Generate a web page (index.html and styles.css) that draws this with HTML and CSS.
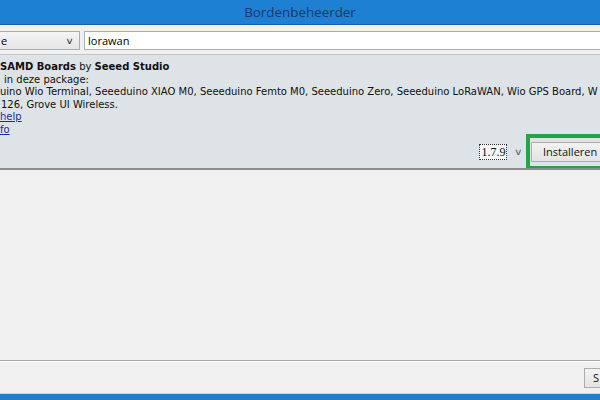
FILE: index.html
```html
<!DOCTYPE html>
<html>
<head>
<meta charset="utf-8">
<link rel="stylesheet" href="styles.css">
</head>
<body>
<div class="window">
  <div class="titlebar">Bordenbeheerder</div>
  <div class="toolbar">
    <div class="combo"><span class="combo-text">e</span><span class="chev">&#x2228;</span></div>
    <div class="search">lorawan</div>
  </div>
  <div class="card">
    <div class="line"><b>SAMD Boards</b> by <b>Seeed Studio</b></div>
    <div class="line indent">in deze package:</div>
    <div class="line">uino Wio Terminal, Seeeduino XIAO M0, Seeeduino Femto M0, Seeeduino Zero, Seeeduino LoRaWAN, Wio GPS Board, W</div>
    <div class="line indent2">126, Grove UI Wireless.</div>
    <div class="line"><a href="#">help</a></div>
    <div class="line"><a href="#">fo</a></div>
    <div class="actions">
      <span class="version">1.7.9</span>
      <span class="vchev">&#x2228;</span>
      <div class="install-wrap">
        <button class="install">Installeren</button>
      </div>
    </div>
  </div>
  <div class="list"></div>
  <div class="footer">
    <button class="close">S</button>
  </div>
  <div class="taskbar"></div>
</div>
</body>
</html>
```
FILE: styles.css
```css
html, body {
  margin: 0;
  padding: 0;
}
body {
  width: 600px;
  height: 400px;
  overflow: hidden;
  background: #f0f0f0;
}
.window {
  display: flex;
  flex-direction: column;
  height: 400px;
}
.titlebar {
  height: 24px;
  flex: none;
  background: #1d80d3;
  border-bottom: 1px solid #1b5fa3;
  color: #1b3864;
  font-family: "Open Sans", sans-serif;
  font-size: 13.4px;
  line-height: 24px;
  text-align: center;
}
.toolbar {
  flex: none;
  height: 30px;
  display: flex;
  align-items: center;
  gap: 4px;
  background: #f0f0f0;
  border-bottom: 1px solid #c4c4c4;
  box-sizing: border-box;
  padding-top: 2px;
}
.combo {
  width: 80px;
  height: 19px;
  box-sizing: border-box;
  border: 1px solid #acacac;
  border-left: none;
  background: linear-gradient(#f4f4f4, #e6e6e6);
  display: flex;
  align-items: center;
  justify-content: space-between;
  font-family: "Open Sans", sans-serif;
  font-size: 11px;
  color: #000;
}
.combo-text {
  padding-left: 1px;
}
.chev, .vchev {
  font-family: "DejaVu Sans", sans-serif;
  font-size: 9px;
  color: #444;
  transform: scaleX(1.3);
}
.chev {
  padding-right: 5px;
}
.search {
  flex: 1;
  height: 19px;
  box-sizing: border-box;
  border: 1px solid #abadb3;
  border-right: none;
  background: #fff;
  font-family: "Open Sans", sans-serif;
  font-size: 11px;
  line-height: 17px;
  padding-left: 3px;
  color: #000;
}
.card {
  flex: none;
  height: 113px;
  box-sizing: border-box;
  background: #dde3e6;
  padding-top: 6px;
  font-family: "DejaVu Sans", Verdana, sans-serif;
  font-size: 10px;
  color: #111;
  white-space: nowrap;
  overflow: hidden;
}
.line {
  height: 12.6px;
  line-height: 12.6px;
}
.indent {
  padding-left: 4px;
}
.indent2 {
  padding-left: 1px;
}
.card a {
  color: #1c2ab0;
  text-decoration: underline;
}
.actions {
  display: flex;
  align-items: center;
  justify-content: flex-end;
  margin-top: -3px;
}
.version {
  font-family: "Liberation Serif", serif;
  font-size: 12px;
  border: 1px dotted #333;
  padding: 0 1px;
  line-height: 14px;
  background: #f4f6f7;
}
.vchev {
  margin-left: 8px;
  margin-right: 4px;
  color: #666;
}
.install-wrap {
  border: 4px solid #21a547;
  border-right: none;
  padding: 4px 0 4px 1px;
  margin-right: -7px;
}
.install {
  display: block;
  width: 76px;
  height: 20px;
  border: 1px solid #acacac;
  background: linear-gradient(#f3f3f3, #e4e4e4);
  font-family: "Open Sans", sans-serif;
  font-size: 11px;
  color: #111;
  text-align: left;
  padding: 0 0 0 11px;
}
.list {
  flex: 1;
  border-top: 2px solid #8c8c8c;
  background: #f0f0f0;
  border-bottom: 1px solid #a8a8a8;
}
.footer {
  flex: none;
  height: 31px;
  border-top: 1px solid #fbfbfb;
  display: flex;
  align-items: center;
  justify-content: flex-end;
  background: #f0f0f0;
}
.close {
  width: 16px;
  height: 20px;
  border: 1px solid #acacac;
  border-right: none;
  background: linear-gradient(#f3f3f3, #e4e4e4);
  font-family: "Open Sans", sans-serif;
  font-size: 11px;
  text-align: left;
  padding: 0 0 0 8px;
  color: #111;
}
.taskbar {
  flex: none;
  height: 6px;
  border-top: 1px solid #b9dcf3;
  background: #1c7fcf;
}
```
